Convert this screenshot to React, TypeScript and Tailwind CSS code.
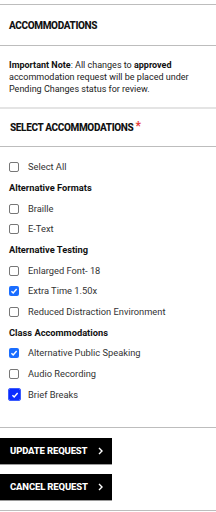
import React from "react";

type Item = { kind: "check"; label: string; checked?: boolean; strong?: boolean } | { kind: "group"; label: string };

const items: Item[] = [
  { kind: "check", label: "Select All" },
  { kind: "group", label: "Alternative Formats" },
  { kind: "check", label: "Braille" },
  { kind: "check", label: "E-Text" },
  { kind: "group", label: "Alternative Testing" },
  { kind: "check", label: "Enlarged Font- 18" },
  { kind: "check", label: "Extra Time 1.50x", checked: true },
  { kind: "check", label: "Reduced Distraction Environment" },
  { kind: "group", label: "Class Accommodations" },
  { kind: "check", label: "Alternative Public Speaking", checked: true },
  { kind: "check", label: "Audio Recording" },
  { kind: "check", label: "Brief Breaks", checked: true, strong: true },
];

function Box({ checked, strong }: { checked?: boolean; strong?: boolean }) {
  if (checked) {
    return (
      <span
        className={
          strong
            ? "flex h-[11px] w-[11px] items-center justify-center rounded-[1px] bg-[#0a2bff] outline outline-1 outline-[#3b5bff]"
            : "flex h-[10px] w-[10px] items-center justify-center rounded-[2px] bg-[#1a6dff]"
        }
      >
        <svg width="8" height="8" viewBox="0 0 10 10">
          <path d="M1.8 5.2 L4 7.4 L8.3 2.6" fill="none" stroke="white" strokeWidth="1.8" />
        </svg>
      </span>
    );
  }
  return <span className="block h-[10px] w-[10px] rounded-[2px] border border-[#777] bg-white" />;
}

function Btn({ label }: { label: string }) {
  return (
    <div className="flex h-[26px] w-[112px] items-center bg-black pl-[10px] shadow-[0_1px_0_#9a9a9a]">
      <span className="text-[9.5px] font-extrabold tracking-[-0.15px] text-white">{label}</span>
      <svg className="ml-auto mr-[8px]" width="7" height="8" viewBox="0 0 7 8">
        <path d="M2 1 L5 4 L2 7" fill="none" stroke="white" strokeWidth="1.4" />
      </svg>
    </div>
  );
}

export default function App() {
  return (
    <div className="w-[216px] bg-white pt-[4px] text-[#222]" style={{ fontFamily: "Roboto, 'Liberation Sans', sans-serif" }}>
      <div className="flex h-[41px] items-center border-t border-[#bdbdbd] pl-[9px]">
        <span className="text-[10px] font-extrabold tracking-[-0.35px] text-[#111]">ACCOMMODATIONS</span>
      </div>
      <div className="border-t border-[#bdbdbd] pl-[9px] pr-[6px] pt-[13px] pb-[12px] text-[9px] leading-[12px] text-[#222]">
        <b className="font-bold text-[#111]">Important Note</b>: All changes to <b className="font-bold text-[#111]">approved</b> accommodation request will be placed under Pending Changes status for review.
      </div>
      <div className="h-[2px] bg-[#e4e4e4]" />
      <div className="flex h-[37px] items-center pl-[10px]">
        <span className="text-[10px] font-extrabold tracking-[-0.35px] text-[#111]">SELECT ACCOMMODATIONS</span>
        <span className="ml-[2px] -mt-[4px] text-[12px] font-bold leading-none text-[#e53935]">*</span>
      </div>
      <div className="border-t border-[#bdbdbd] pt-[10px] pb-[22px]">
        {items.map((it, i) =>
          it.kind === "group" ? (
            <div key={i} className="flex h-[20.66px] items-center pl-[9px] text-[9.3px] font-bold text-[#111]">
              {it.label}
            </div>
          ) : (
            <div key={i} className="flex h-[20.66px] items-center pl-[9px]">
              <span className="flex w-[19px] items-center">
                <Box checked={it.checked} strong={it.strong} />
              </span>
              <span className="text-[9.3px] text-[#333]">{it.label}</span>
            </div>
          )
        )}
      </div>
      <div className="flex flex-col gap-[10px] border-t border-b border-[#bdbdbd] pt-[10px] pb-[10px]">
        <Btn label="UPDATE REQUEST" />
        <Btn label="CANCEL REQUEST" />
      </div>
    </div>
  );
}
